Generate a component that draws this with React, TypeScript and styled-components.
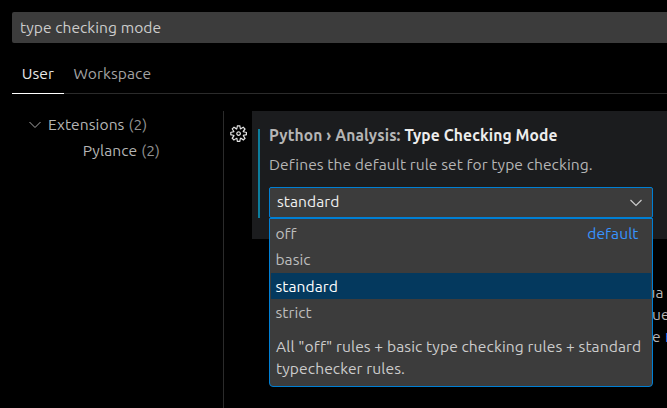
import React from 'react';
import styled, { createGlobalStyle } from 'styled-components';

const GlobalStyle = createGlobalStyle`
  * { box-sizing: border-box; }
  html, body { margin: 0; background: #000; }
  body {
    overflow: hidden;
    color: #b5b5b5;
    font-family: Ubuntu, "Noto Sans", sans-serif;
    font-size: 15.6px;
    line-height: 22px;
    letter-spacing: 0.07px;
  }
`;

const Editor = styled.div`
  display: flex;
  flex-direction: column;
  width: 667px;
  height: 408px;
  padding: 12px 0 0 12px;
  overflow: hidden;
`;

const SearchBox = styled.div`
  flex: none;
  height: 31px;
  padding: 5px 8px;
  border-radius: 2px 0 0 2px;
  background: #3c3c3c;
  color: #cccccc;
  line-height: 21px;
  letter-spacing: 0.04px;
`;

const Tabs = styled.div`
  flex: none;
  display: flex;
  height: 51px;
  padding-top: 19px;
  border-bottom: 1px solid #2b2b2b;
`;

const Tab = styled.div<{ $active?: boolean }>`
  height: 32px;
  padding: 0 9.8px;
  border-bottom: 1px solid ${p => (p.$active ? '#ffffff' : 'transparent')};
  color: ${p => (p.$active ? '#e7e7e7' : '#a3a3a3')};
`;

const Body = styled.div`
  flex: 1;
  display: flex;
  padding-top: 17px;
`;

const Tree = styled.nav`
  width: 212px;
  border-right: 1px solid #2b2b2b;
`;

const TreeRow = styled.div<{ $indent: number }>`
  display: flex;
  align-items: center;
  height: 26.4px;
  padding-left: ${p => p.$indent}px;
  line-height: 27px;
`;

const Count = styled.span`
  margin-left: 4px;
  color: #929292;
`;

const TreeChevron = styled.svg`
  width: 16px;
  height: 16px;
  margin: 2px 5px 0 0;
`;

const Gutter = styled.div`
  width: 28px;
  padding: 12.5px 0 0 5px;
`;

const GearIcon = styled.svg`
  display: block;
  width: 19.2px;
  height: 19.2px;
`;

const Settings = styled.main`
  flex: 1;
  min-width: 0;
`;

const Setting = styled.section`
  display: flex;
  height: 128px;
  padding: 13px 0 0 6px;
  background: #1b1c1e;
`;

const ModifiedBar = styled.div`
  flex: none;
  width: 2px;
  height: 89px;
  margin: 5px 9px 0 0;
  background: #0c7d9d;
`;

const Title = styled.h3`
  margin: 0;
  color: #ededed;
  font-size: 15.6px;
  font-weight: 700;
  letter-spacing: 0.12px;
`;

const Category = styled.span`
  color: #b5b5b5;
`;

const Summary = styled.p`
  margin: 7px 0 12px;
`;

const SelectWrap = styled.div`
  position: relative;
  width: 384px;
`;

const SelectBox = styled.div`
  display: flex;
  align-items: center;
  justify-content: space-between;
  height: 31px;
  padding: 0 8px 3px 7px;
  border: 1px solid #007fd4;
  border-radius: 2px;
  background: #3c3c3c;
  color: #f0f0f0;
`;

const SelectChevron = styled.svg`
  width: 16px;
  height: 16px;
  margin-top: 4px;
`;

const Dropdown = styled.div`
  position: absolute;
  top: 31px;
  left: 0;
  z-index: 1;
  width: 384px;
  height: 169px;
  padding: 0.8px 1px;
  border: 1px solid #007fd4;
  border-radius: 0 0 4px 4px;
  background: #3c3c3c;
  color: #cccccc;
`;

const Option = styled.div<{ $selected?: boolean }>`
  display: flex;
  justify-content: space-between;
  height: 26.4px;
  padding: 0 12.5px 0 4.4px;
  background: ${p => (p.$selected ? '#04395e' : 'transparent')};
  color: ${p => (p.$selected ? '#ffffff' : '#bdbdbd')};
  line-height: 26.4px;
`;

const DefaultTag = styled.span`
  color: #3794ff;
`;

const Explanation = styled.div`
  padding: 9.6px 0 0 5px;
  letter-spacing: 0.1px;
  white-space: nowrap;
`;

const NextSetting = styled.section`
  display: flex;
  flex-direction: column;
  padding-top: 42px;
`;

const Fragment = styled.div<{ $start: number }>`
  padding-left: ${p => p.$start}px;
  white-space: nowrap;
`;

const Code = styled.code`
  margin-left: 4.5px;
  color: #3794ff;
  font-family: "Liberation Mono", monospace;
  font-size: 13px;
  line-height: 20px;
`;

const options = ['off', 'basic', 'standard', 'strict'];

export default function App() {
  return (
    <>
      <GlobalStyle />
      <Editor>
        <SearchBox>type checking mode</SearchBox>
        <Tabs>
          <Tab $active>User</Tab>
          <Tab>Workspace</Tab>
        </Tabs>
        <Body>
          <Tree>
            <TreeRow $indent={15}>
              <TreeChevron viewBox="0 0 16 16" fill="none" stroke="#a8a8a8">
                <path d="M2.5 5 L8 10.5 L13.5 5" />
              </TreeChevron>
              Extensions<Count>(2)</Count>
            </TreeRow>
            <TreeRow $indent={70.8}>
              Pylance<Count>(2)</Count>
            </TreeRow>
          </Tree>
          <Gutter>
            <GearIcon viewBox="0 0 16 16" fill="#e2e2e2" fillRule="evenodd">
              <path d="M9.1 4.4L8.6 2H7.4l-.5 2.4-.7.3-2-1.3-.9.8 1.3 2-.2.7-2.4.5v1.2l2.4.5.3.8-1.3 2 .8.8 2-1.3.8.3.4 2.3h1.2l.5-2.4.8-.3 2 1.3.8-.8-1.3-2 .3-.8 2.3-.4V7.4l-2.4-.5-.3-.8 1.3-2-.8-.8-2 1.3-.7-.2zM9.4 1l.5 2.4L12 2.1l2 2-1.4 2.1 2.4.4v2.8l-2.4.5L14 12l-2 2-2.1-1.4-.5 2.4H6.6l-.5-2.4L4 13.9l-2-2 1.4-2.1L1 9.4V6.6l2.4-.5L2.1 4l2-2 2.1 1.4.4-2.4h2.8zm.6 7c0 1.1-.9 2-2 2s-2-.9-2-2 .9-2 2-2 2 .9 2 2zM8 9c.6 0 1-.4 1-1s-.4-1-1-1-1 .4-1 1 .4 1 1 1z" />
            </GearIcon>
          </Gutter>
          <Settings>
            <Setting>
              <ModifiedBar />
              <div>
                <Title>
                  <Category>Python › Analysis:</Category> Type Checking Mode
                </Title>
                <Summary>Defines the default rule set for type checking.</Summary>
                <SelectWrap>
                  <SelectBox>
                    standard
                    <SelectChevron viewBox="0 0 16 16" fill="none" stroke="#cccccc" strokeWidth="1.2">
                      <path d="M2.5 5 L8 10.5 L13.5 5" />
                    </SelectChevron>
                  </SelectBox>
                  <Dropdown>
                    {options.map(o => (
                      <Option key={o} $selected={o === 'standard'}>
                        {o}
                        {o === 'off' && <DefaultTag>default</DefaultTag>}
                      </Option>
                    ))}
                    <Explanation>
                      All "off" rules + basic type checking rules + standard
                      <br />
                      typechecker rules.
                    </Explanation>
                  </Dropdown>
                </SelectWrap>
              </div>
            </Setting>
            <NextSetting>
              <Fragment $start={394.5}>ua</Fragment>
              <Fragment $start={400}>ue</Fragment>
              <Fragment $start={400}>
                e<Code>b</Code>
              </Fragment>
            </NextSetting>
          </Settings>
        </Body>
      </Editor>
    </>
  );
}
